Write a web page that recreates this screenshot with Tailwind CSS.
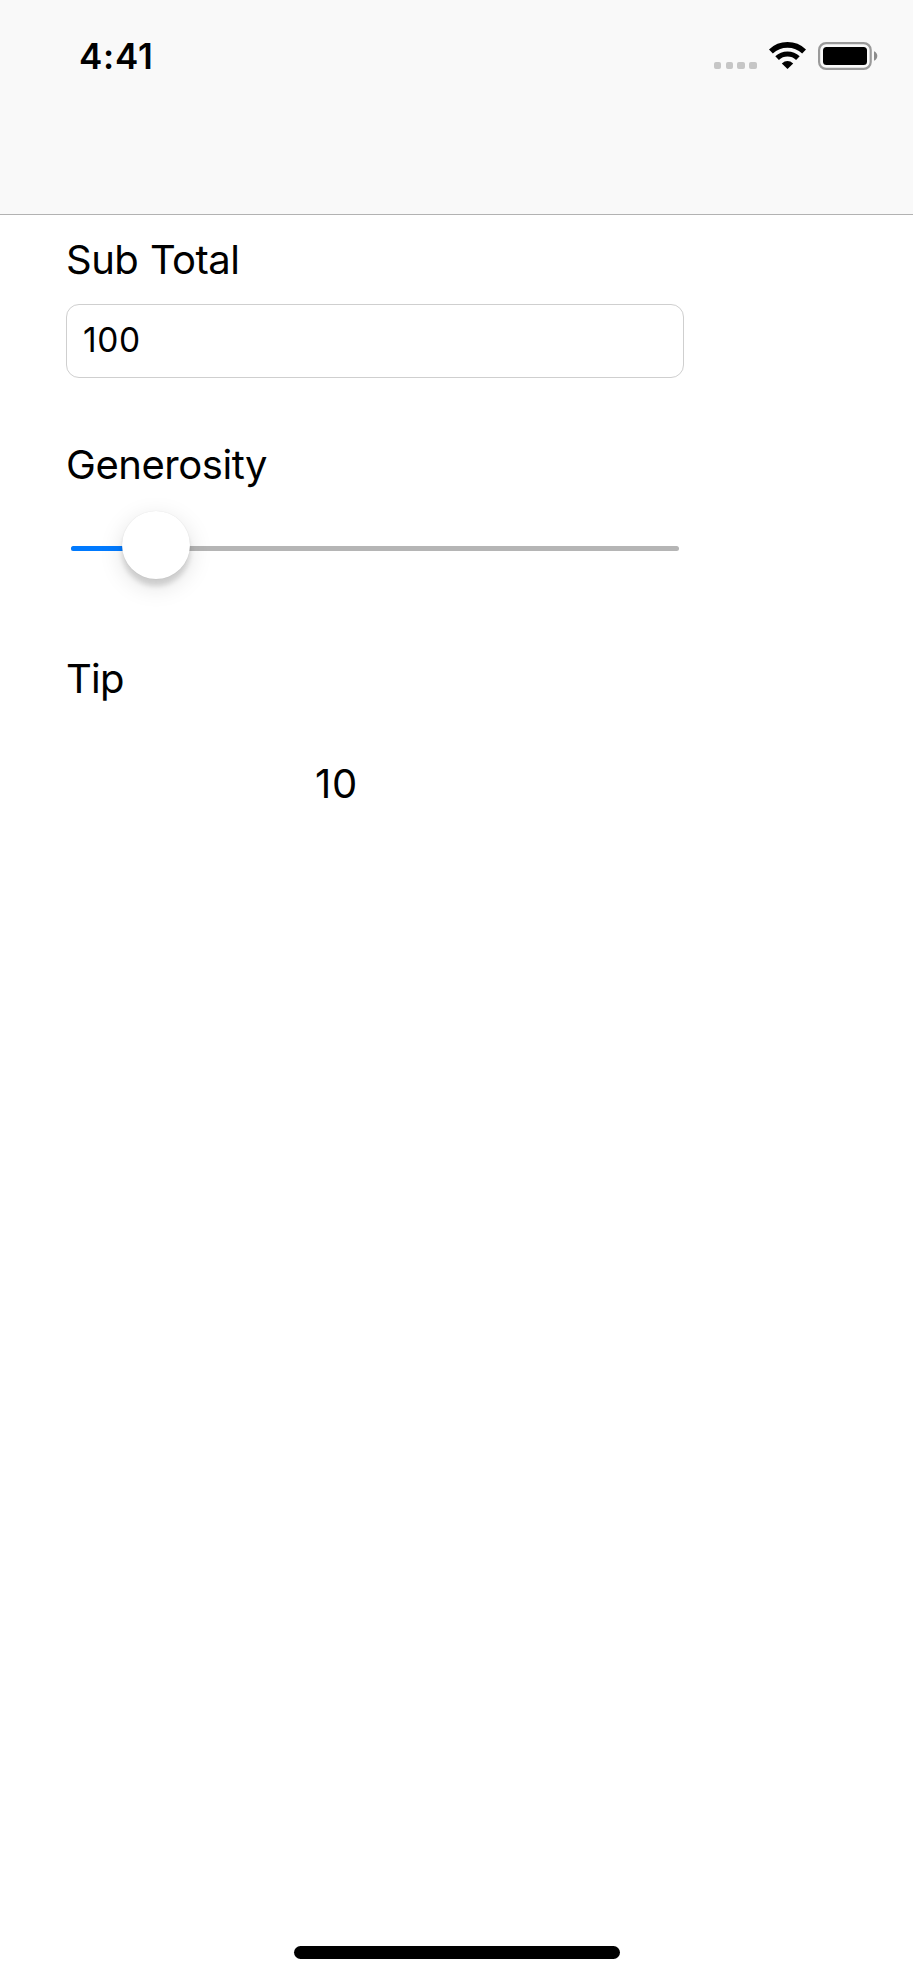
<!DOCTYPE html>
<html lang="en">
<head>
<meta charset="utf-8">
<title>Tip Calculator</title>
<script src="https://cdn.jsdelivr.net/npm/@tailwindcss/browser@4"></script>
</head>
<body class="bg-white">
<div class="flex h-[1978px] w-[913px] flex-col overflow-hidden bg-white font-[Inter,sans-serif] text-black">
  <header class="flex h-[215px] shrink-0 items-start justify-between border-b border-[#b2b2b2] bg-[#f9f9f9] pl-[79px] pr-[35px]">
    <div class="mt-[35px] text-[35px] leading-[42px] font-semibold tracking-[0.8px]">4:41</div>
    <div class="mt-[42px] flex h-7 items-start">
      <div class="mt-5 mr-[12px] flex gap-[4.4px]">
        <span class="h-[7px] w-[7.4px] rounded-[2px] bg-[#c6c6c6]"></span>
        <span class="h-[7px] w-[7.4px] rounded-[2px] bg-[#c6c6c6]"></span>
        <span class="h-[7px] w-[7.4px] rounded-[2px] bg-[#c6c6c6]"></span>
        <span class="h-[7px] w-[7.4px] rounded-[2px] bg-[#c6c6c6]"></span>
      </div>
      <svg class="mr-[12.5px] h-[27px] w-[37px]" viewBox="0 0 37 27" fill="none" stroke="#000">
        <path d="M1.9 9.5A24 24 0 0 1 35.1 9.5" stroke-width="5.6"/>
        <path d="M8.1 16.2A15 15 0 0 1 28.9 16.2" stroke-width="5.2"/>
        <path d="M12.8 21.4Q18.5 16.8 24.2 21.4L18.5 27Z" fill="#000" stroke="none"/>
      </svg>
      <svg class="h-7 w-[60px]" viewBox="0 0 60 28">
        <rect x="1.1" y="1.1" width="51.6" height="25.8" rx="7" fill="none" stroke="#9a9a9a" stroke-width="2.2"/>
        <rect x="5" y="5" width="44" height="18" rx="3.5"/>
        <path d="M56 9.3C60.4 11 60.4 17 56 18.7Z" fill="#8c8c8c"/>
      </svg>
    </div>
  </header>

  <main class="flex w-[684px] flex-1 flex-col pt-[21px] pl-[66px]">
    <label class="text-[40px] leading-[48px] tracking-[-0.53px] [word-spacing:1px]">Sub Total</label>
    <div class="mt-5 h-[74px] w-[618px] rounded-[13px] border border-[#cfcfcf] pt-[14.5px] pl-4 text-[33.5px] leading-10 tracking-[0.6px]">100</div>

    <label class="mt-[63px] text-[40px] leading-[48px] tracking-[-0.45px]">Generosity</label>
    <div class="mt-[22px] flex h-[68px] items-center pr-[5px] pl-[5px]">
      <div class="relative mt-[7px] h-[5px] w-[608px] rounded-full bg-[#b5b5b5]">
        <div class="h-[5px] w-[85px] rounded-l-full bg-[#007aff]"></div>
        <div class="absolute top-[-35px] left-[51px] size-[68px] rounded-full bg-white shadow-[0_0_1px_rgba(0,0,0,0.12),0_7px_5px_rgba(0,0,0,0.13),0_7px_24px_rgba(0,0,0,0.13)]"></div>
      </div>
    </div>

    <label class="mt-[76px] text-[40px] leading-[48px] tracking-[-0.8px]">Tip</label>
    <div class="mt-[57px] pl-[249px] text-[40px] leading-[48px] tracking-[0.8px]">10</div>
  </main>

  <footer class="flex h-8 shrink-0 justify-center">
    <div class="h-[13px] w-[326px] rounded-full bg-black"></div>
  </footer>
</div>
</body>
</html>
